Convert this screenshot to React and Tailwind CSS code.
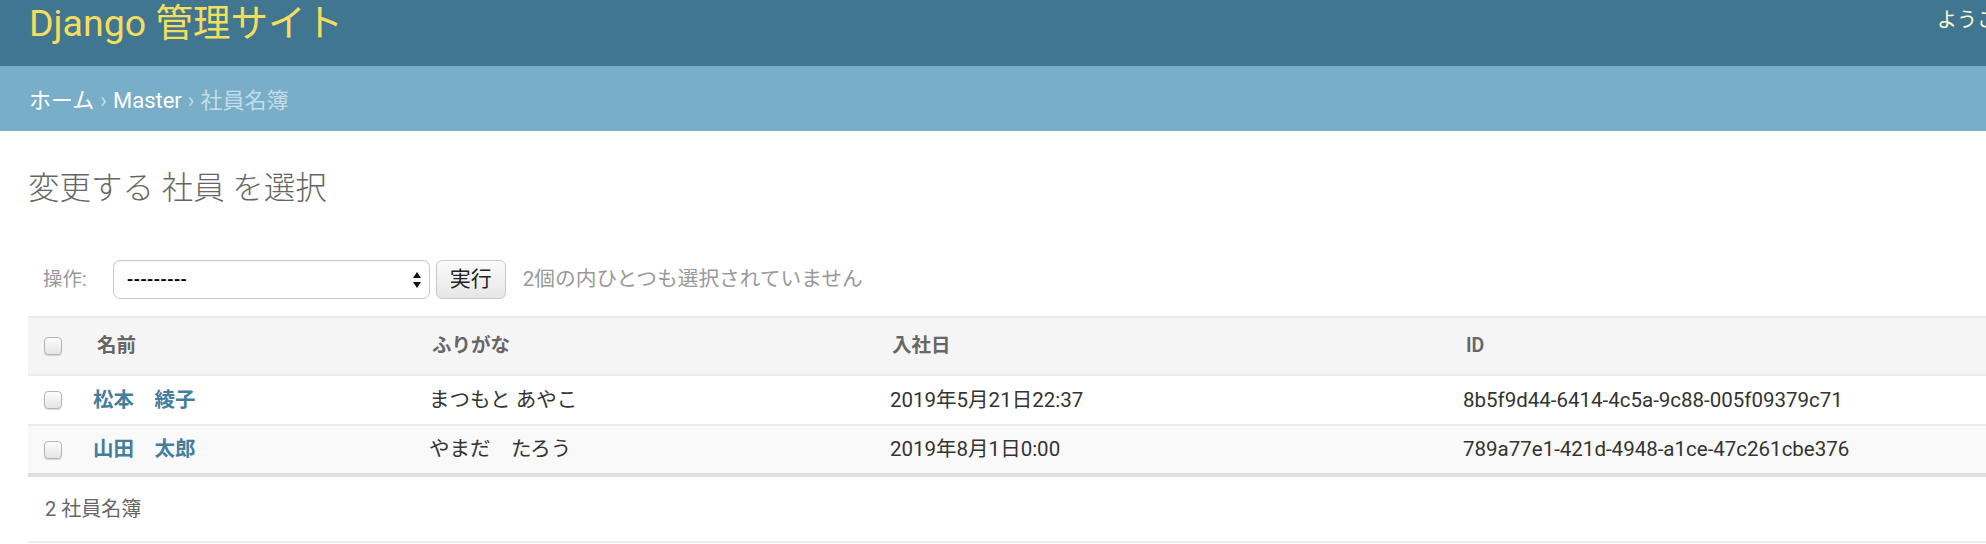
import React from "react";

const font = "font-['Roboto','Noto_Sans_CJK_JP',sans-serif]";

const rows = [
  {
    name: "松本　綾子",
    kana: "まつもと あやこ",
    date: "2019年5月21日22:37",
    id: "8b5f9d44-6414-4c5a-9c88-005f09379c71",
  },
  {
    name: "山田　太郎",
    kana: "やまだ　たろう",
    date: "2019年8月1日0:00",
    id: "789a77e1-421d-4948-a1ce-47c261cbe376",
  },
];

const Checkbox = () => (
  <span className="block h-[18px] w-[18px] rounded-[4px] border border-[#b5b5b5] bg-gradient-to-b from-[#fdfdfd] to-[#e4e4e4] shadow-[0_1px_1px_rgba(0,0,0,0.15)]"></span>
);

const App = () => {
  return (
    <div className={`w-full overflow-hidden bg-white ${font}`}>
      <div className="w-[2600px]">
        {/* header */}
        <header className="grid h-[66px] grid-cols-[1907px_1fr] bg-[#417690]">
          <h1 className="pl-[29px] pt-[1px] text-[37.5px] font-normal leading-[44px] text-[#f5dd5d]">
            Django 管理サイト
          </h1>
          <div className="whitespace-nowrap pl-[30px] pt-[7px] text-[20px] leading-[26px] text-[#ffffcc]">
            ようこそ、 admin。 サイトを表示 / パスワードの変更 / ログアウト
          </div>
        </header>

        {/* breadcrumbs */}
        <nav className="flex h-[65px] items-center bg-[#79aec8] pl-[29px] pt-[3px] text-[22px] text-white">
          <span>ホーム</span>
          <span className="px-[6px] text-[#c4dce8]">›</span>
          <span>Master</span>
          <span className="px-[6px] text-[#c4dce8]">›</span>
          <span className="text-[#c4dce8]">社員名簿</span>
        </nav>

        {/* content */}
        <main className="pl-[28px] pt-[42px]">
          <h2 className="text-[31.5px] font-light leading-[32px] text-[#666]">変更する 社員 を選択</h2>

          <div className="mt-[55px] flex h-[39px] items-center">
            <span className="pl-[15px] pr-[26px] text-[19.5px] text-[#999]">操作:</span>
            <div className="flex h-[39px] w-[317px] items-center justify-between rounded-[7px] border border-[#c8c8c8] bg-white pl-[13px] pr-[6px] shadow-[inset_0_1px_1px_rgba(0,0,0,0.04)]">
              <span className="text-[17px] font-bold leading-none text-black">---------</span>
              <svg width="12" height="20" viewBox="0 0 12 20">
                <path d="M6 2 L10 8 L2 8 Z" fill="#111" />
                <path d="M6 18 L10 12 L2 12 Z" fill="#111" />
              </svg>
            </div>
            <div className="ml-[6px] flex h-[39px] w-[70px] items-center justify-center rounded-[6px] border border-[#c8c8c8] bg-gradient-to-b from-[#fbfbfb] to-[#e6e6e6] text-[21px] text-[#222]">
              実行
            </div>
            <span className="ml-[17px] text-[20.7px] text-[#999]">2個の内ひとつも選択されていません</span>
          </div>

          {/* results table */}
          <div className="mt-[17px]">
            <div className="grid h-[60px] grid-cols-[53px_338px_459px_573px_1fr] items-center border-y-2 border-[#ececec] bg-[#f5f5f5] text-[19.5px] font-semibold text-[#666]">
              <div className="pl-[16px]">
                <Checkbox />
              </div>
              <div className="pl-[16px]">名前</div>
              <div className="pl-[13px]">ふりがな</div>
              <div className="pl-[14px]">入社日</div>
              <div className="pl-[15px]">ID</div>
            </div>
            {rows.map((r, i) => (
              <div
                key={r.id}
                className={`grid grid-cols-[53px_338px_459px_573px_1fr] items-center text-[20.5px] text-[#333] ${
                  i === 0 ? "h-[50px] border-b-2 border-[#ececec] bg-white" : "h-[51px] border-b-[4px] border-[#dedede] bg-[#f9f9f9]"
                }`}
              >
                <div className="pl-[16px]">
                  <Checkbox />
                </div>
                <div className="pl-[12px] font-bold text-[#447e9b]">{r.name}</div>
                <div className="pl-[10px]">{r.kana}</div>
                <div className="pl-[12px]">{r.date}</div>
                <div className="pl-[12px]">{r.id}</div>
              </div>
            ))}
            <div className="flex h-[66px] items-center border-b-2 border-[#eee] pl-[17px] text-[20px] text-[#666]">
              2 社員名簿
            </div>
          </div>
        </main>
      </div>
    </div>
  );
};

export default App;
